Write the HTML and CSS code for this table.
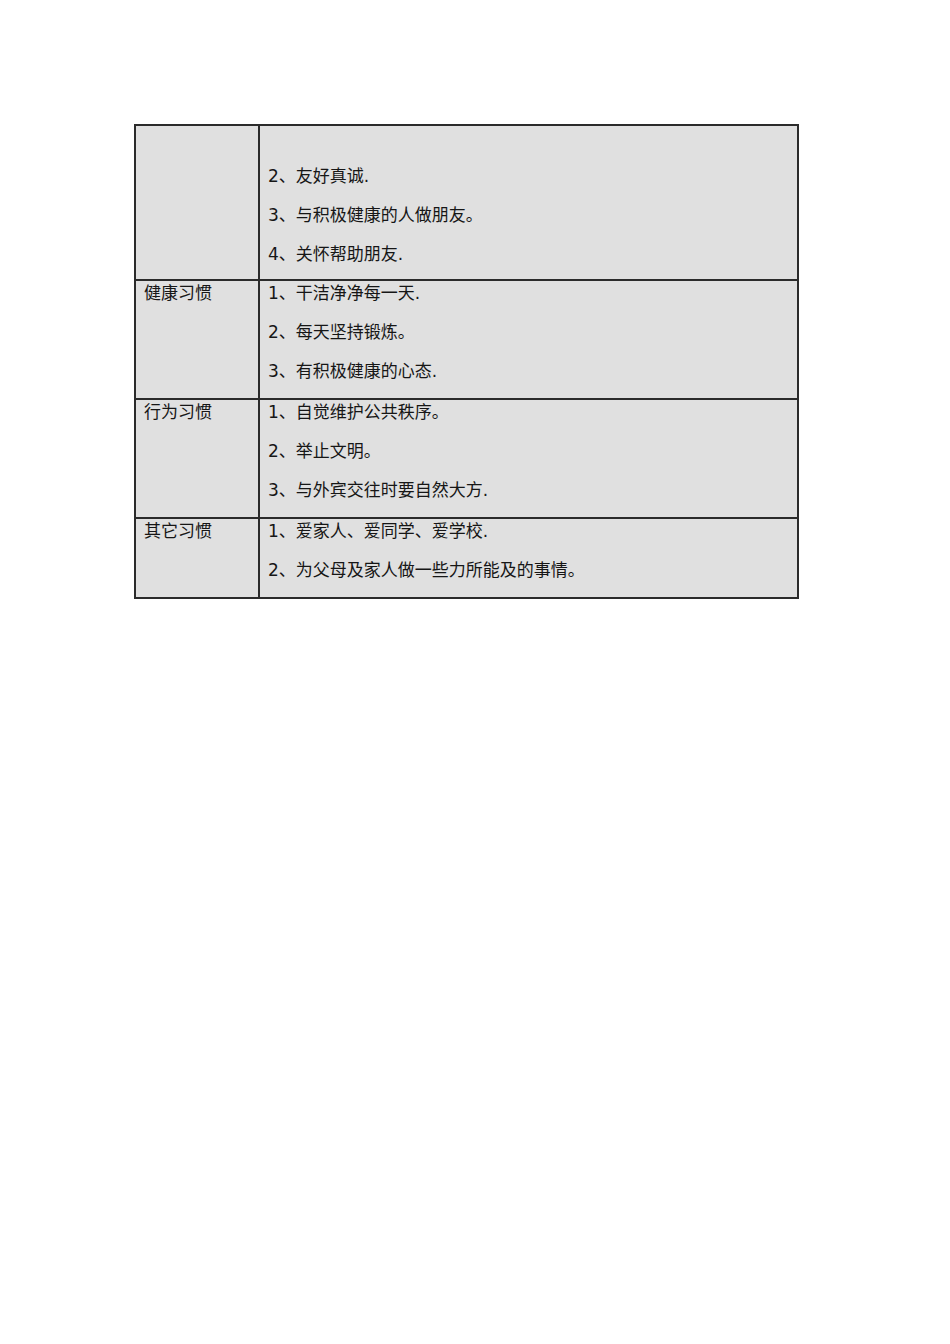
FILE: index.html
```html
<!DOCTYPE html>
<html lang="zh">
<head>
<meta charset="utf-8">
<link rel="stylesheet" href="styles.css">
</head>
<body>
<div class="page">
  <table class="habits">
    <tr class="cont-row">
      <td class="label"></td>
      <td class="items">
        <p class="blank">&nbsp;</p>
        <p>2、友好真诚.</p>
        <p>3、与积极健康的人做朋友。</p>
        <p>4、关怀帮助朋友.</p>
      </td>
    </tr>
    <tr>
      <td class="label"><p>健康习惯</p></td>
      <td class="items">
        <p>1、干洁净净每一天.</p>
        <p>2、每天坚持锻炼。</p>
        <p>3、有积极健康的心态.</p>
      </td>
    </tr>
    <tr>
      <td class="label"><p>行为习惯</p></td>
      <td class="items">
        <p>1、自觉维护公共秩序。</p>
        <p>2、举止文明。</p>
        <p>3、与外宾交往时要自然大方.</p>
      </td>
    </tr>
    <tr>
      <td class="label"><p>其它习惯</p></td>
      <td class="items">
        <p>1、爱家人、爱同学、爱学校.</p>
        <p>2、为父母及家人做一些力所能及的事情。</p>
      </td>
    </tr>
  </table>
</div>
</body>
</html>
```

FILE: styles.css
```css
html, body {
  margin: 0;
  padding: 0;
  background: #ffffff;
}
body {
  font-family: "DejaVu Sans", "Noto Sans CJK SC", sans-serif;
  font-size: 17px;
  color: #161616;
}
.page {
  padding: 124px 0 0 134px;
}
.habits {
  border-collapse: collapse;
  width: 665px;
  background: #e0e0e0;
}
.habits td {
  border: 2px solid #2b2b2b;
  padding: 0 8px;
  vertical-align: top;
}
.habits td.label {
  width: 106px;
}
.habits p {
  margin: 0 0 15px;
  line-height: 24px;
  white-space: nowrap;
}
.habits p.blank {
  margin-bottom: 14px;
}
.habits .cont-row p:last-child {
  margin-bottom: 13px;
}
```
